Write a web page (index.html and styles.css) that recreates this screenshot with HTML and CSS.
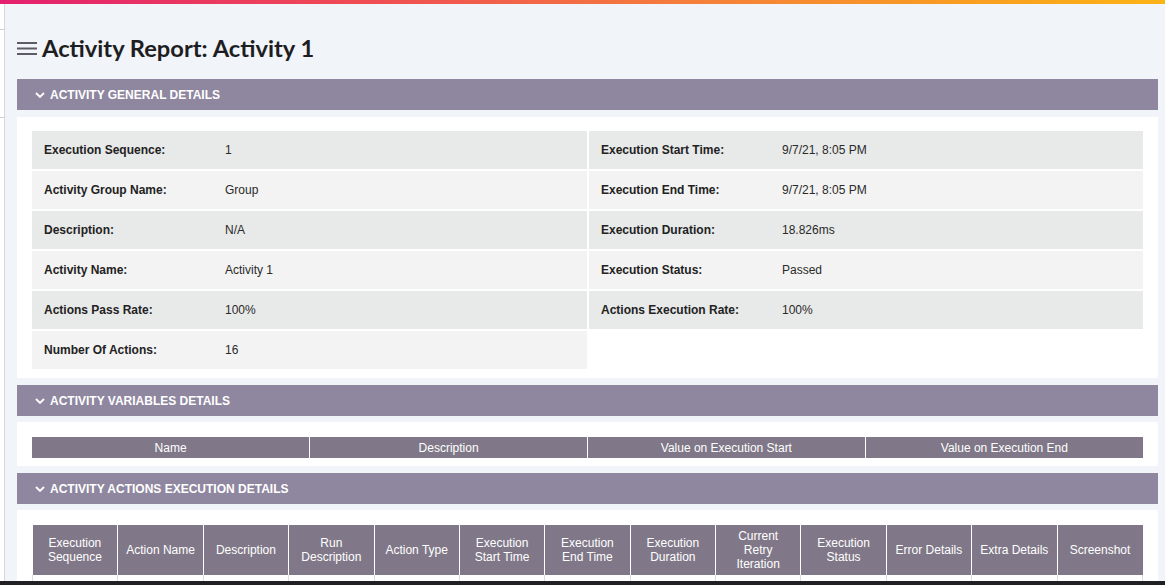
FILE: index.html
```html
<!DOCTYPE html>
<html lang="en">
<head>
<meta charset="utf-8">
<title>Activity Report: Activity 1</title>
<link rel="stylesheet" href="styles.css">
</head>
<body>
<div class="topbar"></div>
<div class="layout">
  <aside class="rail">
    <div class="rail-cell rail-cell-top"></div>
    <div class="rail-cell rail-cell-mid"></div>
  </aside>
  <main class="main">
    <header class="page-head">
      <svg class="menu-icon" width="20" height="14" viewBox="0 0 20 14" aria-hidden="true">
        <rect x="0" y="0" width="20" height="2" fill="#5d5b66"/>
        <rect x="0" y="5.5" width="20" height="2" fill="#5d5b66"/>
        <rect x="0" y="11" width="20" height="2" fill="#5d5b66"/>
      </svg>
      <h1 class="page-title">Activity Report: Activity 1</h1>
    </header>

    <section class="section">
      <div class="section-bar">
        <svg class="chevron" width="10" height="6" viewBox="0 0 10 6" aria-hidden="true"><polyline points="1,1 5,5 9,1" fill="none" stroke="#fff" stroke-width="1.8"/></svg>
        <span class="section-title">ACTIVITY GENERAL DETAILS</span>
      </div>
      <div class="section-body section-body-general">
        <div class="details">
          <div class="details-col">
            <div class="detail-row dark"><span class="detail-label">Execution Sequence:</span><span class="detail-value">1</span></div>
            <div class="detail-row light"><span class="detail-label">Activity Group Name:</span><span class="detail-value">Group</span></div>
            <div class="detail-row dark"><span class="detail-label">Description:</span><span class="detail-value">N/A</span></div>
            <div class="detail-row light"><span class="detail-label">Activity Name:</span><span class="detail-value">Activity 1</span></div>
            <div class="detail-row dark"><span class="detail-label">Actions Pass Rate:</span><span class="detail-value">100%</span></div>
            <div class="detail-row light"><span class="detail-label">Number Of Actions:</span><span class="detail-value">16</span></div>
          </div>
          <div class="details-col">
            <div class="detail-row dark"><span class="detail-label">Execution Start Time:</span><span class="detail-value">9/7/21, 8:05 PM</span></div>
            <div class="detail-row light"><span class="detail-label">Execution End Time:</span><span class="detail-value">9/7/21, 8:05 PM</span></div>
            <div class="detail-row dark"><span class="detail-label">Execution Duration:</span><span class="detail-value">18.826ms</span></div>
            <div class="detail-row light"><span class="detail-label">Execution Status:</span><span class="detail-value">Passed</span></div>
            <div class="detail-row dark"><span class="detail-label">Actions Execution Rate:</span><span class="detail-value">100%</span></div>
          </div>
        </div>
      </div>
    </section>

    <section class="section">
      <div class="section-bar">
        <svg class="chevron" width="10" height="6" viewBox="0 0 10 6" aria-hidden="true"><polyline points="1,1 5,5 9,1" fill="none" stroke="#fff" stroke-width="1.8"/></svg>
        <span class="section-title">ACTIVITY VARIABLES DETAILS</span>
      </div>
      <div class="section-body section-body-vars">
        <table class="grid-table vars-table">
          <thead>
            <tr><th>Name</th><th>Description</th><th>Value on Execution Start</th><th>Value on Execution End</th></tr>
          </thead>
        </table>
      </div>
    </section>

    <section class="section">
      <div class="section-bar">
        <svg class="chevron" width="10" height="6" viewBox="0 0 10 6" aria-hidden="true"><polyline points="1,1 5,5 9,1" fill="none" stroke="#fff" stroke-width="1.8"/></svg>
        <span class="section-title">ACTIVITY ACTIONS EXECUTION DETAILS</span>
      </div>
      <div class="section-body section-body-actions">
        <table class="grid-table actions-table">
          <thead>
            <tr>
              <th>Execution Sequence</th>
              <th>Action Name</th>
              <th>Description</th>
              <th>Run Description</th>
              <th>Action Type</th>
              <th>Execution Start Time</th>
              <th>Execution End Time</th>
              <th>Execution Duration</th>
              <th>Current Retry Iteration</th>
              <th>Execution Status</th>
              <th>Error Details</th>
              <th>Extra Details</th>
              <th>Screenshot</th>
            </tr>
          </thead>
          <tbody>
            <tr><td></td><td></td><td></td><td></td><td></td><td></td><td></td><td></td><td></td><td></td><td></td><td></td><td></td></tr>
          </tbody>
        </table>
      </div>
    </section>
  </main>
</div>
<div class="taskbar"></div>
</body>
</html>
```

FILE: styles.css
```css
html, body {
  margin: 0;
  padding: 0;
}

body {
  background: #f1f4f9;
  font-family: "Liberation Sans", Arial, sans-serif;
  font-size: 12px;
  color: #222;
  overflow: hidden;
}

.topbar {
  height: 4px;
  background: linear-gradient(90deg, #e3206f 0%, #ef4a55 30%, #f5803a 60%, #f9a020 85%, #fbb316 100%);
}

.layout {
  display: flex;
  align-items: stretch;
  min-height: 581px;
}

.rail {
  width: 4px;
  flex: none;
  background: #fff;
  border-right: 1px solid #d8d8dc;
}

.rail-cell {
  border-bottom: 1px solid #d0d0d4;
}

.rail-cell-top {
  height: 25px;
}

.rail-cell-mid {
  height: 87px;
}

.main {
  flex: 1;
  padding: 0 7px 0 12px;
}

.page-head {
  display: flex;
  align-items: center;
  gap: 5px;
  height: 36px;
  margin-top: 26px;
  margin-bottom: 13px;
}

.menu-icon {
  flex: none;
  margin-top: 2px;
}

.page-title {
  margin: 0;
  font-family: Lato, "Open Sans", sans-serif;
  font-weight: 700;
  font-size: 23.7px;
  color: #1e1e22;
}

.section {
  margin-bottom: 7px;
}

.section-bar {
  display: flex;
  align-items: center;
  gap: 5px;
  height: 31px;
  padding-left: 18px;
  background: #8f87a0;
  color: #fff;
}

.chevron {
  flex: none;
}

.section-title {
  font-weight: 700;
  font-size: 12px;
}

.section-body {
  margin-top: 7px;
  background: #fff;
  padding: 15px 15px 8px;
}

.section-body-general {
  padding: 14px 15px 9px;
}

.section-body-vars {
  margin-top: 6px;
  padding-bottom: 8px;
}

.section-body-actions {
  margin-top: 6px;
}

.details {
  display: grid;
  grid-template-columns: 555px 1fr;
  column-gap: 2px;
  align-items: start;
}

.details-col {
  display: flex;
  flex-direction: column;
  gap: 2px;
}

.detail-row {
  display: flex;
  align-items: center;
  height: 38px;
  padding-left: 12px;
}

.detail-row.dark {
  background: #e8e9e9;
}

.detail-row.light {
  background: #f3f3f3;
}

.detail-label {
  width: 181px;
  flex: none;
  font-weight: 700;
  color: #222;
}

.detail-value {
  color: #2a2a2a;
}

.grid-table {
  width: 100%;
  border-collapse: collapse;
  table-layout: fixed;
}

.grid-table th {
  background: #807888;
  color: #fff;
  font-weight: 400;
  font-size: 12px;
  text-align: center;
  border-left: 1px solid #fff;
  padding: 0 7px;
}

.grid-table th:first-child {
  border-left: none;
}

.vars-table th {
  height: 21px;
  line-height: 14px;
}

.actions-table th {
  height: 50px;
  line-height: 14px;
}

.actions-table td {
  height: 30px;
  border: 1px solid #dcdcdc;
  border-top: none;
}

.taskbar {
  position: fixed;
  left: 0;
  right: 0;
  bottom: 0;
  height: 4px;
  background: #202024;
}
```
